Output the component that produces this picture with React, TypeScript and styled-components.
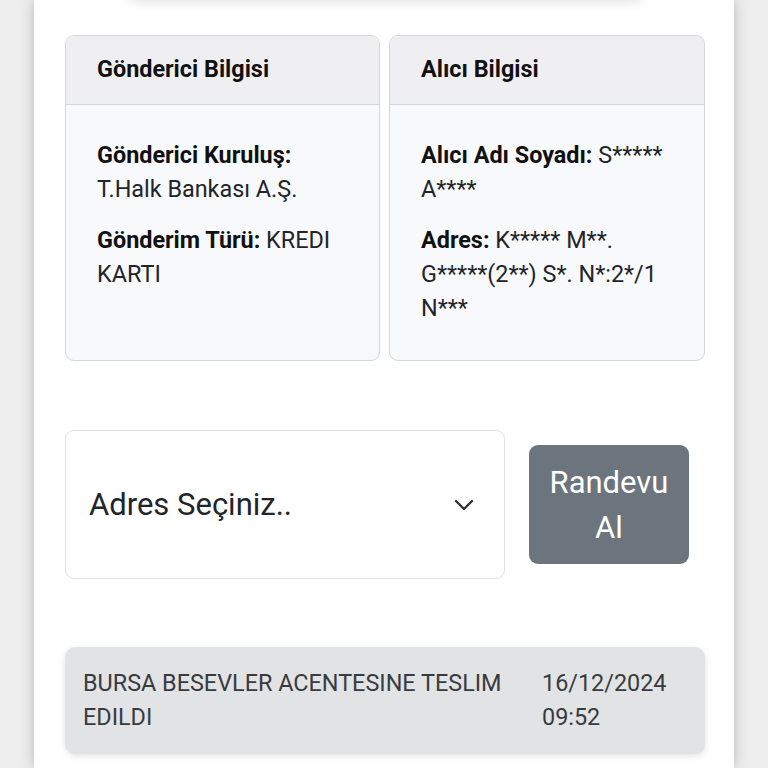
import React from "react";
import styled, { createGlobalStyle } from "styled-components";

const GlobalStyle = createGlobalStyle`
  html, body {
    margin: 0;
    padding: 0;
    background: #eeeeee;
    font-family: Roboto, "Noto Sans", Arial, sans-serif;
    color: #212529;
    overflow: hidden;
  }
`;

const Page = styled.div`
  display: flow-root;
  width: 700px;
  min-height: 768px;
  margin-left: 34px;
  background: #ffffff;
  box-shadow: 0 0 14px rgba(0, 0, 0, 0.22);
  padding: 0 29px 0 31px;
  box-sizing: border-box;
`;

const PrevCard = styled.div`
  width: 520px;
  height: 60px;
  margin: -62px auto 0;
  background: #ffffff;
  border-radius: 14px;
  box-shadow: 0 4px 12px rgba(0, 0, 0, 0.12);
`;

const InfoGrid = styled.div`
  display: grid;
  grid-template-columns: 315px 316px;
  gap: 9px;
  margin-top: 37px;
`;

const Card = styled.div`
  display: flex;
  flex-direction: column;
  border: 1px solid #d5d6d8;
  border-radius: 9px;
  overflow: hidden;
  background: #f8f9fa;
`;

const CardHeader = styled.div`
  background: #efeff1;
  border-bottom: 1px solid #d5d6d8;
  padding: 20px 31px 21px;
  font-size: 23.4px;
  line-height: 27px;
  font-weight: 700;
  color: #111;
`;

const CardBody = styled.div`
  flex: 1;
  padding: 33px 32px 18px 31px;
`;

const Field = styled.p`
  margin: 0 0 17px;
  font-size: 23.4px;
  line-height: 34px;
  color: #212529;
  b {
    font-weight: 700;
    color: #111;
  }
`;

const ActionRow = styled.div`
  display: flex;
  align-items: center;
  gap: 24px;
  margin-top: 69px;
`;

const Select = styled.div`
  width: 440px;
  height: 149px;
  box-sizing: border-box;
  border: 1px solid #dee2e6;
  border-radius: 9px;
  background: #fff;
  display: flex;
  align-items: center;
  justify-content: space-between;
  padding: 0 30px 0 23px;
  font-size: 31px;
  color: #212529;
`;

const Button = styled.button`
  width: 160px;
  height: 119px;
  border: none;
  border-radius: 9px;
  background: #6c757d;
  color: #fff;
  font-family: inherit;
  font-size: 31px;
  line-height: 45px;
  padding: 14px 16px;
  text-align: center;
`;

const StatusItem = styled.div`
  display: grid;
  grid-template-columns: 1fr 145px;
  gap: 14px;
  margin-top: 68px;
  background: #e2e3e5;
  border-radius: 10px;
  padding: 19px 18px 20px;
  box-shadow: 0 2px 6px rgba(0, 0, 0, 0.12);
  font-size: 23.4px;
  line-height: 34px;
  color: #383b3e;
`;

export default function App() {
  return (
    <>
      <GlobalStyle />
      <Page>
        <PrevCard />
        <InfoGrid>
          <Card>
            <CardHeader>Gönderici Bilgisi</CardHeader>
            <CardBody>
              <Field>
                <b>Gönderici Kuruluş:</b> T.Halk Bankası A.Ş.
              </Field>
              <Field>
                <b>Gönderim Türü:</b> KREDI KARTI
              </Field>
            </CardBody>
          </Card>
          <Card>
            <CardHeader>Alıcı Bilgisi</CardHeader>
            <CardBody>
              <Field>
                <b>Alıcı Adı Soyadı:</b> S***** A****
              </Field>
              <Field>
                <b>Adres:</b> K***** M**. G*****(2**) S*. N*:2*/1 N***
              </Field>
            </CardBody>
          </Card>
        </InfoGrid>
        <ActionRow>
          <Select>
            <span>Adres Seçiniz..</span>
            <svg width="20" height="12" viewBox="0 0 20 12" fill="none">
              <path d="M2 2l8 8 8-8" stroke="#333" strokeWidth="2.4" strokeLinecap="round" strokeLinejoin="round" />
            </svg>
          </Select>
          <Button>Randevu Al</Button>
        </ActionRow>
        <StatusItem>
          <span>BURSA BESEVLER ACENTESINE TESLIM EDILDI</span>
          <span>16/12/2024 09:52</span>
        </StatusItem>
      </Page>
    </>
  );
}
